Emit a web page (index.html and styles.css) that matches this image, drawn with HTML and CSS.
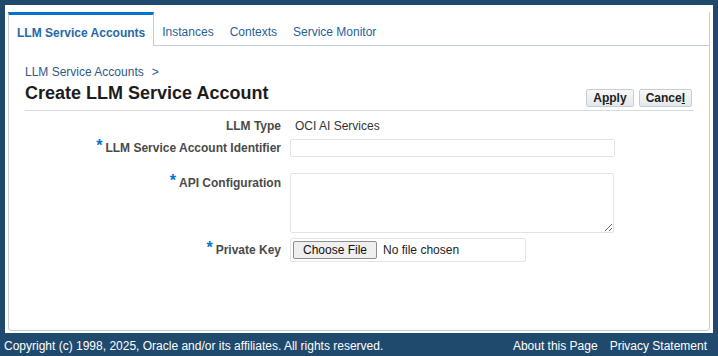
FILE: index.html
```html
<!DOCTYPE html>
<html>
<head>
<meta charset="utf-8">
<link rel="stylesheet" href="styles.css">
</head>
<body>
<div class="page">
  <div class="shell">
    <div class="panel">
      <div class="tabs">
        <a class="tab active">LLM Service Accounts</a>
        <a class="tab">Instances</a>
        <a class="tab">Contexts</a>
        <a class="tab">Service Monitor</a>
        <div class="tab-fill"></div>
      </div>
      <div class="content">
        <div class="crumbs"><a class="crumb">LLM Service Accounts</a><span class="sep">&gt;</span></div>
        <div class="header">
          <h1 class="title">Create LLM Service Account</h1>
          <div class="actions">
            <button class="btn">A<u>p</u>ply</button>
            <button class="btn">Cance<u>l</u></button>
          </div>
        </div>
        <div class="form">
          <div class="row row-type">
            <div class="label">LLM Type</div>
            <div class="field"><span class="value">OCI AI Services</span></div>
          </div>
          <div class="row row-id">
            <div class="label"><span class="req">*</span>LLM Service Account Identifier</div>
            <div class="field"><input class="text" type="text"></div>
          </div>
          <div class="row row-api">
            <div class="label label-top"><span class="req">*</span>API Configuration</div>
            <div class="field"><textarea class="area"></textarea></div>
          </div>
          <div class="row row-key">
            <div class="label"><span class="req">*</span>Private Key</div>
            <div class="field"><input class="file" type="file"></div>
          </div>
        </div>
      </div>
    </div>
  </div>
  <div class="footer">
    <span class="copy">Copyright (c) 1998, 2025, Oracle and/or its affiliates. All rights reserved.</span>
    <span class="links"><a class="flink">About this Page</a><a class="flink">Privacy Statement</a></span>
  </div>
</div>
</body>
</html>
```
FILE: styles.css
```css
* { box-sizing: border-box; }
html, body { margin: 0; padding: 0; }
body {
  background: #1f4a6e;
  font-family: "Liberation Sans", Arial, sans-serif;
  font-size: 12px;
  color: #333;
}
.page {
  width: 718px;
  height: 356px;
  display: flex;
  flex-direction: column;
}
.shell {
  margin: 5px 5px 0 5px;
  background: #fff;
  padding: 7px 3px 2px 3px;
  height: 328px;
}
.panel {
  height: 100%;
  border: 1px solid #c4ced7;
  border-top: none;
  border-radius: 0 0 4px 4px;
  display: flex;
  flex-direction: column;
}
.tabs {
  display: flex;
  align-items: stretch;
  height: 34px;
}
.tab {
  color: #1f5f9e;
  padding: 0 8px;
  display: flex;
  align-items: center;
  padding-top: 6px;
  border-bottom: 1px solid #c4ced7;
}
.tab.active {
  color: #2569a9;
  font-weight: bold;
  border-top: 3px solid #0572ce;
  border-right: 1px solid #c4ced7;
  border-bottom: none;
  padding: 4px 8px 0 8px;
  margin-left: -1px;
  border-left: 1px solid #c4ced7;
}
.tab-fill {
  flex: 1;
  border-bottom: 1px solid #c4ced7;
}
.content {
  padding: 0 16px 0 16px;
}
.crumbs {
  margin-top: 19px;
  color: #2b5b8a;
  font-size: 12px;
  line-height: 14px;
}
.crumb { color: #2b5b8a; }
.sep { margin-left: 8px; }
.header {
  display: flex;
  align-items: flex-end;
  justify-content: space-between;
  border-bottom: 1px solid #d6dce2;
  height: 32px;
  margin-right: -1px;
}
.title {
  margin: 0;
  font-size: 18px;
  font-weight: bold;
  color: #1c1c1c;
  line-height: 22px;
  padding-bottom: 6px;
}
.actions {
  display: flex;
  gap: 5px;
  padding-bottom: 3px;
  margin-right: 2px;
}
.btn {
  font-family: "Liberation Sans", Arial, sans-serif;
  font-size: 12px;
  font-weight: bold;
  color: #1c1c1c;
  height: 18px;
  padding: 0 6px;
  border: 1px solid #c4ced7;
  border-radius: 2px;
  background: linear-gradient(#f7f8f9, #e3e8ec);
  line-height: 16px;
}
.form {
  display: flex;
  flex-direction: column;
}
.row {
  display: flex;
  align-items: center;
}
.label {
  width: 256px;
  text-align: right;
  font-weight: bold;
  color: #4a4a4a;
  padding-right: 0;
}
.field {
  margin-left: 9px;
}
.row-type { height: 16px; margin-top: 7px; }
.row-type .value { margin-left: 5px; color: #333; }
.row-id { margin-top: 5px; }
.row-api { margin-top: 16px; align-items: flex-start; }
.row-api .label { padding-top: 3px; }
.row-key { margin-top: 5px; }
.req {
  color: #0572ce;
  font-size: 16px;
  font-weight: bold;
  position: relative;
  top: -1px;
  margin-right: 3px;
  line-height: 10px;
}
.text {
  width: 325px;
  height: 18px;
  border: 1px solid #dfe4e7;
  border-radius: 2px;
  font-family: "Liberation Sans", Arial, sans-serif;
  font-size: 12px;
}
.area {
  display: block;
  width: 324px;
  height: 60px;
  border: 1px solid #dfe4e7;
  border-radius: 2px;
  font-family: "Liberation Sans", Arial, sans-serif;
  font-size: 12px;
  margin: 0;
}
.file {
  width: 236px;
  height: 24px;
  border: 1px solid #dfe4e7;
  border-radius: 2px;
  padding: 2px;
  font-family: "Liberation Sans", Arial, sans-serif;
  font-size: 12px;
  color: #222;
}
.file::file-selector-button {
  font-family: "Liberation Sans", Arial, sans-serif;
  font-size: 12px;
  height: 18px;
  padding: 0 9px;
  margin-right: 6px;
  border: 1px solid #8f8f8f;
  border-radius: 2px;
  background: #efefef;
  color: #111;
}
.footer {
  flex: 1;
  display: flex;
  justify-content: space-between;
  align-items: center;
  color: #fff;
  padding: 2px 11px 0 4px;
  font-size: 12px;
}
.links { display: flex; gap: 12px; }
.flink { color: #fff; }
```
